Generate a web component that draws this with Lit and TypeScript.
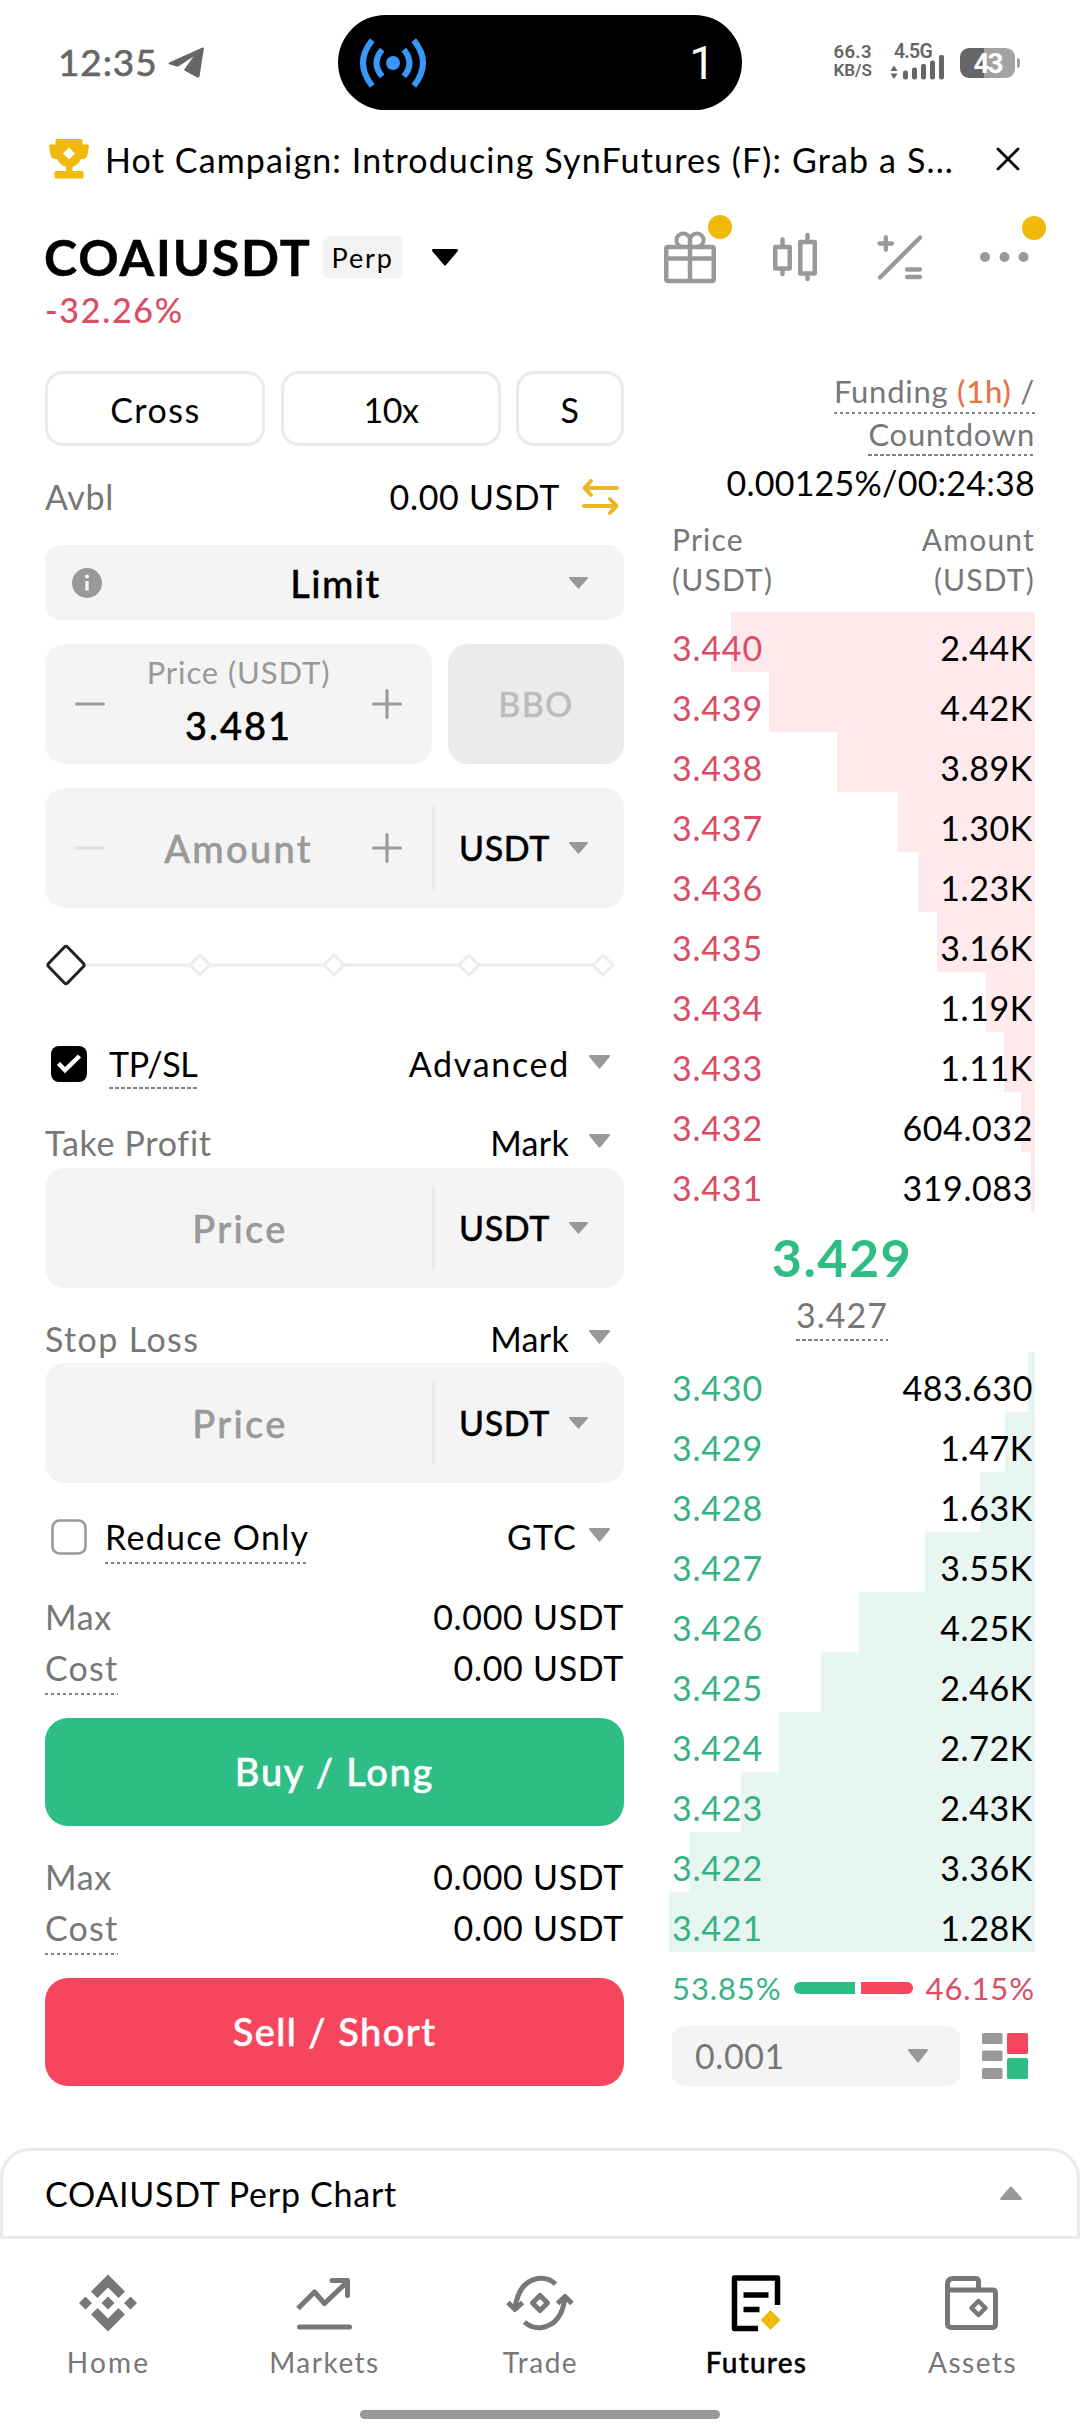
import { LitElement, html, css, svg } from "lit";
import { customElement, property } from "lit/decorators.js";

type Row = [price: string, amount: string, depth: number];

const ASKS: Row[] = [
  ["3.440", "2.44K", 304],
  ["3.439", "4.42K", 266],
  ["3.438", "3.89K", 198],
  ["3.437", "1.30K", 137],
  ["3.436", "1.23K", 117],
  ["3.435", "3.16K", 98],
  ["3.434", "1.19K", 49],
  ["3.433", "1.11K", 31],
  ["3.432", "604.032", 14],
  ["3.431", "319.083", 4],
];

const BIDS: Row[] = [
  ["3.430", "483.630", 7],
  ["3.429", "1.47K", 30],
  ["3.428", "1.63K", 55],
  ["3.427", "3.55K", 110],
  ["3.426", "4.25K", 176],
  ["3.425", "2.46K", 214],
  ["3.424", "2.72K", 256],
  ["3.423", "2.43K", 294],
  ["3.422", "3.36K", 346],
  ["3.421", "1.28K", 366],
];

const caret = (w: number, h: number, color: string, up = false) => html`
  <svg width=${w} height=${h} viewBox="0 0 20 13" preserveAspectRatio="none" fill=${color} stroke=${color}
    stroke-width="2" stroke-linejoin="round">
    ${up ? svg`<path d="M1 12L10 1.4L19 12z" />` : svg`<path d="M1 1L10 11.6L19 1z" />`}
  </svg>`;

@customElement("status-bar")
class StatusBar extends LitElement {
  static styles = css`
    :host { display: grid; grid-template-columns: 338px 404px 338px; height: 95px; padding-top: 15px; align-items: center; color: #666; }
    svg { display: block; }
    .left { display: flex; align-items: center; padding-left: 58px; gap: 10px; }
    .time { font: 400 37px/40px Lato, sans-serif; letter-spacing: 0.9px; -webkit-text-stroke: 0.6px #666; padding-bottom: 2px; }
    .island { display: flex; align-items: center; justify-content: space-between; height: 95px; border-radius: 48px; background: #000; padding: 0 27px 0 21px; box-sizing: border-box; }
    .count { font: 400 46px/50px Roboto, sans-serif; color: #fff; }
    .right { display: flex; align-items: center; justify-content: flex-end; padding-right: 60px; }
    .speed { font: 600 18.500px/18px Roboto, sans-serif; display: flex; flex-direction: column; margin-right: 18px; padding-bottom: 4px; letter-spacing: 0.400px; }
    .unit { font-size: 17px; letter-spacing: 0; }
    .net { width: 54px; display: flex; flex-direction: column; margin-right: 16px; padding-bottom: 2px; }
    .gen { font: 600 19.500px/18px Roboto, sans-serif; letter-spacing: -0.800px; padding-left: 4px; }
    .bars { margin-top: -6px; }
    .battery { width: 55px; height: 30px; border-radius: 9px; background: linear-gradient(90deg, #666 24px, #a3a3a3 24px); color: #fff; font: 700 28px/31px Roboto, sans-serif; letter-spacing: -2px; text-align: center; }
    .nub { width: 3px; height: 10px; margin-left: 2px; border-radius: 0 3px 3px 0; background: #a3a3a3; }
  `;
  render() {
    return html`
      <div class="left">
        <span class="time">12:35</span>
        <svg width="36" height="31" viewBox="0 0 36 31" fill="#666"><path d="M34.500 .6Q36 .2 35.900 1.600L31.500 29.500Q31 31.200 29.400 30.400L16.800 23.800Q15.800 23 16.600 22L25.400 9.600L11.400 18.800Q9.800 19.800 8 19.200L1.200 17.200Q-.3 16.300 1.200 15.400z" /></svg>
      </div>
      <div class="island">
        <svg width="68" height="52" viewBox="0 0 68 52" fill="none" stroke="#3797fb" stroke-width="6">
          <circle cx="34" cy="26" r="7" fill="#3797fb" stroke="none" />
          <path d="M23.200 12.600Q11.800 26 23.200 39.400M44.800 12.600Q56.200 26 44.800 39.400" />
          <path d="M13.200 3.200Q-5.200 26 13.200 48.800M54.800 3.200Q73.200 26 54.800 48.800" />
        </svg>
        <span class="count">1</span>
      </div>
      <div class="right">
        <div class="speed"><span>66.3</span><span class="unit">KB/S</span></div>
        <div class="net">
          <span class="gen">4.5G</span>
          <svg class="bars" width="54" height="25" viewBox="0 0 54 25" fill="#666">
            <path d="M4 10.500L7.600 16H.4zM4 24L7.600 18.500H.4z" />
            <rect x="13" y="15.500" width="5" height="9" rx="2" /><rect x="22" y="12.500" width="5" height="12" rx="2" />
            <rect x="31" y="9" width="5" height="15.500" rx="2" /><rect x="40" y="5.500" width="5" height="19" rx="2" />
            <rect x="49" y="0" width="5" height="24.500" rx="2" />
          </svg>
        </div>
        <div class="battery">43</div><div class="nub"></div>
      </div>`;
  }
}

@customElement("depth-rows")
class DepthRows extends LitElement {
  @property({ attribute: false }) rows: Row[] = [];
  @property() side = "ask";
  static styles = css`
    :host { display: flex; flex-direction: column; font: 400 34px/60px Lato, sans-serif; letter-spacing: 0.800px; }
    .row { position: relative; display: flex; justify-content: space-between; height: 60px; padding: 6px 2px 0 0; box-sizing: border-box; }
    .bar { position: absolute; right: 0; top: 0; height: 60px; }
    .ask .bar { background: #feeaed; }
    .bid .bar { background: #e8f6f1; }
    .price { position: relative; }
    .amount { position: relative; color: #000; letter-spacing: 0.600px; }
    .ask { color: #da4d64; }
    .bid { color: #36b285; }
  `;
  render() {
    return this.rows.map(([p, a, w]) => html`
      <div class="row ${this.side}">
        <div class="bar" style="width:${w}px"></div>
        <span class="price">${p}</span><span class="amount">${a}</span>
      </div>`);
  }
}

@customElement("order-form")
class OrderForm extends LitElement {
  static styles = css`
    :host { display: flex; flex-direction: column; width: 579px; font: 400 34px/40px Lato, sans-serif; letter-spacing: 0.700px; color: #000; }
    svg { display: block; }
    .row { display: flex; align-items: center; justify-content: space-between; height: 40px; }
    .muted { color: #777; }
    .modes { display: grid; grid-template-columns: 220px 220px 108px; justify-content: space-between; }
    .mode { height: 75px; box-sizing: border-box; border: 3px solid #ebebeb; border-radius: 18px; display: flex; align-items: center; justify-content: center; padding: 2px 0 0 1px; letter-spacing: 1.500px; }
    .tight { letter-spacing: -0.500px; }
    .avbl { margin-top: 31px; }
    .funds { display: flex; align-items: center; gap: 22px; padding-right: 5px; }
    .field { background: #f4f4f4; border-radius: 20px; height: 120px; display: flex; align-items: center; box-sizing: border-box; }
    .limit { margin-top: 28px; height: 75px; border-radius: 16px; padding: 0 36px 0 27px; justify-content: space-between; font-size: 38px; font-weight: 500; letter-spacing: 1.500px; -webkit-text-stroke: 0.400px; }
    .prices { display: grid; grid-template-columns: 387px 176px; justify-content: space-between; margin-top: 24px; }
    .step { padding: 0 30px; justify-content: space-between; }
    .stack { display: flex; flex-direction: column; align-items: center; padding-bottom: 9px; }
    .hint { font-size: 31px; line-height: 38px; letter-spacing: 0.900px; color: #999; margin-bottom: 12px; }
    .val { font-size: 38px; line-height: 44px; font-weight: 500; letter-spacing: 2px; -webkit-text-stroke: 0.400px; }
    .bbo { background: #ebebeb; color: #bcbcbc; justify-content: center; font-weight: 500; letter-spacing: 1.300px; -webkit-text-stroke: 0.400px; }
    .split { margin-top: 24px; }
    .main { width: 387px; box-sizing: border-box; display: flex; align-items: center; justify-content: space-between; padding: 0 30px; font-size: 38px; font-weight: 500; color: #999; letter-spacing: 2.300px; -webkit-text-stroke: 0.500px; }
    .main svg, .limit svg { -webkit-text-stroke: 0; }
    .main.only { justify-content: center; padding-left: 33px; }
    .unit { flex: 1; height: 84px; border-left: 3px solid #eaeaea; display: flex; align-items: center; justify-content: space-between; padding: 0 36px 0 24px; font-weight: 500; letter-spacing: 0.600px; -webkit-text-stroke: 0.400px; }
    .slider { margin-top: 34px; }
    .tpsl { height: 42px; margin-top: 55px; }
    .check { display: flex; align-items: center; padding-left: 6px; }
    .dash { position: relative; }
    .dash::after { content: ""; position: absolute; left: 0; right: 0; bottom: -7px; height: 2px; background: repeating-linear-gradient(90deg, #808080 0 3.500px, transparent 3.500px 6px); }
    .box { width: 36px; height: 36px; }
    .t1 { margin-left: 22px; letter-spacing: -0.400px; line-height: 36px; }
    .t2 { margin-left: 18px; letter-spacing: 1.300px; }
    .pick { display: flex; align-items: center; gap: 20px; padding-right: 14px; }
    .pick svg { margin-bottom: 4px; }
    .adv { letter-spacing: 1.700px; gap: 19px; }
    .mark { letter-spacing: 0.300px; }
    .gtc { letter-spacing: 1.200px; gap: 12px; }
    .tp { margin-top: 38px; }
    .sl { margin-top: 31px; }
    .sl .muted { letter-spacing: 1.400px; }
    .tp + .split { margin-top: 5px; }
    .sl + .split { margin-top: 4px; }
    .reduce { margin-top: 34px; }
    .max { margin-top: 40px; }
    .max.second { margin-top: 31px; }
    .cost { margin-top: 11px; }
    .cost .dash { letter-spacing: 1.200px; }
    .btn { height: 108px; box-sizing: border-box; padding-bottom: 2px; margin-top: 30px; border-radius: 23px; display: flex; align-items: center; justify-content: center; color: #fff; font-size: 38px; font-weight: 500; letter-spacing: 1.750px; -webkit-text-stroke: 0.500px; }
    .buy { background: #2ebd85; }
    .sell { background: #f6465d; letter-spacing: 1.450px; }
  `;
  private minus(color: string) {
    return html`<svg width="30" height="30" viewBox="0 0 30 30" stroke=${color} stroke-width="3" stroke-linecap="round"><path d="M1.500 15H28.500" /></svg>`;
  }
  private plus() {
    return html`<svg width="30" height="30" viewBox="0 0 30 30" stroke="#999" stroke-width="3" stroke-linecap="round"><path d="M1.500 15H28.500M15 1.500V28.500" /></svg>`;
  }
  private unit() {
    return html`<div class="unit"><span>USDT</span>${caret(19, 12, "#999")}</div>`;
  }
  private pick(label: string, cls: string) {
    return html`<div class="pick ${cls}"><span>${label}</span>${caret(21, 14, "#999")}</div>`;
  }
  private summary(cls = "") {
    return html`
      <div class="row max ${cls}"><span class="muted">Max</span><span>0.000 USDT</span></div>
      <div class="row cost"><span class="muted dash">Cost</span><span>0.00 USDT</span></div>`;
  }
  render() {
    return html`
      <div class="modes"><div class="mode">Cross</div><div class="mode tight">10x</div><div class="mode">S</div></div>
      <div class="row avbl">
        <span class="muted">Avbl</span>
        <div class="funds"><span>0.00 USDT</span>
          <svg width="37" height="36" viewBox="0 0 37 36" fill="none" stroke="#ebb725" stroke-width="4" stroke-linecap="round" stroke-linejoin="round"><path d="M35 9H2.500M9 2L2.500 9L9 16M2 27H34.500M28 20L34.500 27L28 34" /></svg>
        </div>
      </div>
      <div class="field limit">
        <svg width="30" height="30" viewBox="0 0 30 30"><circle cx="15" cy="15" r="15" fill="#999" /><circle cx="15" cy="8.600" r="2" fill="#f4f4f4" /><path d="M15 13V22.500" stroke="#f4f4f4" stroke-width="3.400" /></svg>
        <span>Limit</span>${caret(19, 12, "#999")}
      </div>
      <div class="prices">
        <div class="field step">${this.minus("#999")}
          <div class="stack"><span class="hint">Price (USDT)</span><span class="val">3.481</span></div>${this.plus()}
        </div>
        <div class="field bbo">BBO</div>
      </div>
      <div class="field split"><div class="main">${this.minus("#ddd")}<span>Amount</span>${this.plus()}</div>${this.unit()}</div>
      <svg class="slider" width="579" height="46" viewBox="0 0 579 46" fill="#fff" stroke-linejoin="round">
        <path d="M40 23H547" stroke="#eaecef" stroke-width="3" />
        ${[155, 289, 424, 558].map((x) => svg`<path d="M${x - 10} 23L${x} 13L${x + 10} 23L${x} 33z" stroke="#eaecef" stroke-width="3" />`)}
        <path d="M3.500 24.500Q2.300 23 3.500 21.500L19.500 5Q21 3.500 22.500 5L38.500 21.500Q39.700 23 38.500 24.500L22.500 41Q21 42.500 19.500 41z" stroke="#1e2329" stroke-width="3" />
      </svg>
      <div class="row tpsl">
        <div class="check">
          <svg class="box" viewBox="0 0 36 36"><rect width="36" height="36" rx="8" fill="#000" /><path d="M7.500 17.500L14 24L28.500 10" fill="none" stroke="#fff" stroke-width="4.500" /></svg>
          <span class="dash t1">TP/SL</span>
        </div>
        ${this.pick("Advanced", "adv")}
      </div>
      <div class="row tp"><span class="muted">Take Profit</span>${this.pick("Mark", "mark")}</div>
      <div class="field split"><div class="main only">Price</div>${this.unit()}</div>
      <div class="row sl"><span class="muted">Stop Loss</span>${this.pick("Mark", "mark")}</div>
      <div class="field split"><div class="main only">Price</div>${this.unit()}</div>
      <div class="row reduce">
        <div class="check">
          <svg class="box" viewBox="0 0 36 36"><rect x="1.500" y="1.500" width="33" height="33" rx="7" fill="#fff" stroke="#999" stroke-width="2.600" /></svg>
          <span class="dash t2">Reduce Only</span>
        </div>
        ${this.pick("GTC", "gtc")}
      </div>
      ${this.summary()}
      <div class="btn buy">Buy / Long</div>
      ${this.summary("second")}
      <div class="btn sell">Sell / Short</div>`;
  }
}

@customElement("order-book")
class OrderBook extends LitElement {
  static styles = css`
    :host { display: flex; flex-direction: column; width: 363px; font: 400 34px/40px Lato, sans-serif; color: #000; }
    .dash { position: relative; }
    .dash::after { content: ""; position: absolute; left: 0; right: 0; bottom: 0; height: 2px; background: repeating-linear-gradient(90deg, #808080 0 3.500px, transparent 3.500px 6px); }
    .fund { align-self: flex-end; height: 43px; font-size: 31px; color: #777; letter-spacing: 0.750px; }
    .fund b { color: #e5734a; font-weight: 500; }
    .count { align-self: flex-end; height: 42px; font-size: 31px; color: #777; letter-spacing: 0.750px; }
    .rate { align-self: flex-end; margin-top: 7px; letter-spacing: 0.250px; }
    .head { display: flex; justify-content: space-between; margin-top: 17px; margin-bottom: 13px; height: 79px; font-size: 30px; line-height: 39.500px; color: #777; letter-spacing: 1.200px; }
    .head div:last-child { text-align: right; }
    .mid { height: 140px; display: flex; flex-direction: column; align-items: center; padding: 15px 23px 0 0; box-sizing: border-box; }
    .last { font-size: 52px; line-height: 60px; font-weight: 700; color: #2ebd85; letter-spacing: 1.500px; }
    .index { margin-top: 8px; height: 46px; color: #777; letter-spacing: 1px; }
    .ratio { display: flex; align-items: center; justify-content: space-between; height: 40px; margin-top: 16px; font-size: 31px; letter-spacing: 0.900px; }
    .buy { color: #36b285; }
    .sell { color: #da4d64; }
    .bars { display: flex; gap: 6px; width: 119px; height: 12px; }
    .bars i { display: block; border-radius: 6px 0 0 6px; background: #2ebd85; }
    .bars i + i { border-radius: 0 6px 6px 0; background: #f6465d; flex: 1; }
    .foot { display: flex; align-items: center; justify-content: space-between; margin-top: 18px; padding-right: 7px; }
    .tick { width: 288px; height: 60px; box-sizing: border-box; border-radius: 12px; background: #f4f4f4; display: flex; align-items: center; justify-content: space-between; padding: 0 32px 0 23px; color: #777; letter-spacing: 0.600px; }
    svg { display: block; }
  `;
  render() {
    return html`
      <div class="fund dash">Funding <b>(1h)</b> /</div>
      <div class="count dash">Countdown</div>
      <div class="rate">0.00125%/00:24:38</div>
      <div class="head"><div>Price<br />(USDT)</div><div>Amount<br />(USDT)</div></div>
      <depth-rows side="ask" .rows=${ASKS}></depth-rows>
      <div class="mid"><div class="last">3.429</div><div class="index dash">3.427</div></div>
      <depth-rows side="bid" .rows=${BIDS}></depth-rows>
      <div class="ratio"><span class="buy">53.85%</span><div class="bars"><i style="width:${(53.85 / 100) * 113}px"></i><i></i></div><span class="sell">46.15%</span></div>
      <div class="foot">
        <div class="tick"><span>0.001</span>${caret(20, 14, "#999")}</div>
        <svg width="46" height="46" viewBox="0 0 46 46"><g fill="#999"><rect width="20.500" height="11" rx="1.500" /><rect y="17.500" width="20.500" height="10.500" rx="1.500" /><rect y="35" width="20.500" height="11" rx="1.500" /></g><rect x="25" width="21" height="21" rx="1.500" fill="#f6465d" /><rect x="25" y="25" width="21" height="21" rx="1.500" fill="#2ebd85" /></svg>
      </div>`;
  }
}

const NAV = [
  { label: "Home", cls: "home", icon: svg`<g fill="#777"><path d="M30 1.500L47 18.500L40.500 25L30 14.500L19.500 25L13 18.500z" /><path d="M30 58.500L47 41.500L40.500 35L30 45.500L19.500 35L13 41.500z" /><path d="M30 23.500L36.500 30L30 36.500L23.500 30zM7.500 23.500L14 30L7.500 36.500L1 30zM52.500 23.500L59 30L52.500 36.500L46 30z" /></g>` },
  { label: "Markets", cls: "", icon: svg`<g fill="none" stroke="#777" stroke-width="5" stroke-linejoin="round"><path d="M4 35.500L20.500 19L30.500 30.500L53 9" /><path d="M38 7.500H53.500V22.500" stroke-linecap="round" /><path d="M5.500 54H55.500" stroke-linecap="round" /></g>` },
  { label: "Trade", cls: "", icon: svg`<g fill="none" stroke="#777" stroke-width="5" stroke-linejoin="round"><path d="M45.500 11Q38 4 28 5.500Q8 9 5 36" /><path d="M-2 29.500L5 36.500L12.500 29.500" /><path d="M14.500 49Q22 56 32 54.500Q52 51 55 24" /><path d="M47.500 30.500L55 23.500L62 30.500" /><path d="M30 22.500L37.500 30L30 37.500L22.500 30z" /></g>` },
  { label: "Futures", cls: "on", icon: svg`<g fill="none" stroke="#000" stroke-width="5.500" stroke-linejoin="round"><path d="M32 55.500H8.500V5H51.500V32" /><path d="M17.500 22H42.500M17.500 36.500H33.500" /></g><path d="M44.500 37L54.500 47L44.500 57L34.500 47z" fill="#f0b90b" />` },
  { label: "Assets", cls: "", icon: svg`<g fill="none" stroke="#777" stroke-width="5" stroke-linejoin="round"><path d="M36.500 17V8.500Q36.500 5.500 33.500 5.500H11Q5.500 5.500 5.500 11.500V50.500Q5.500 54.500 9.500 54.500H50Q53.500 54.500 53.500 51V20Q53.500 17 50.500 17H6" /><path d="M36.500 28L43.500 35L36.500 42L29.500 35z" stroke-width="4.500" /></g>` },
];

@customElement("app-root")
class AppRoot extends LitElement {
  static styles = css`
    :host { display: flex; flex-direction: column; width: 1080px; height: 2436px; background: #fff; overflow: hidden; font-family: Lato, "Noto Sans", sans-serif; color: #000; }
    svg { display: block; overflow: visible; }
    .banner { display: flex; align-items: center; height: 70px; margin-top: 14px; padding: 0 61px 0 49px; font-size: 34px; letter-spacing: 1.140px; }
    .banner span { margin: 1px auto 0 16px; white-space: nowrap; }
    .head { display: flex; align-items: center; height: 64px; margin-top: 31px; padding: 0 51px 0 44px; }
    .pair { font-size: 50px; line-height: 60px; font-weight: 700; letter-spacing: 1.900px; -webkit-text-stroke: 0.500px; }
    .chip { margin: 0 29px 0 11px; height: 42px; width: 80px; line-height: 43px; border-radius: 6px; background: #f3f3f3; font-size: 27px; letter-spacing: 1.900px; text-align: center; }
    .tools { display: flex; align-items: center; margin-left: auto; }
    .tool { position: relative; }
    .candles { margin-left: 57px; }
    .calc { margin-left: 60px; }
    .more { margin-left: 57px; }
    .badge { position: absolute; width: 24px; height: 24px; border-radius: 50%; background: #f0b90b; }
    .b1 { left: 44px; top: -16px; }
    .b2 { left: 42px; top: -36.500px; }
    .change { height: 40px; padding-left: 45px; font-size: 34px; line-height: 41px; letter-spacing: 1.700px; color: #da4d64; font-weight: 500; }
    .body { display: flex; justify-content: space-between; height: 1715px; margin-top: 42px; padding: 0 45px; }
    .chart { display: flex; align-items: center; justify-content: space-between; box-sizing: border-box; height: 91px; margin-top: 62px; padding: 0 55px 1px 42px; border: 3px solid #ebebeb; border-radius: 30px 30px 0 0; font-size: 34px; letter-spacing: 0.730px; }
    .nav { display: grid; grid-template-columns: repeat(5, 216px); height: 161px; padding-top: 34px; box-sizing: border-box; }
    .item { display: flex; flex-direction: column; align-items: center; color: #777; font-size: 28px; line-height: 34px; letter-spacing: 1.500px; gap: 12px; }
    .item span { padding-left: 1px; }
    .item.on { color: #000; font-weight: 500; letter-spacing: 1.200px; -webkit-text-stroke: 0.400px; }
    .item.home { letter-spacing: 2.200px; }
    .pill { width: 360px; height: 9px; margin: 10px auto 0; border-radius: 5px; background: #999; }
  `;
  render() {
    return html`
      <status-bar></status-bar>
      <div class="banner">
        <svg width="40" height="40" viewBox="0 0 40 40" fill="#f0b90b">
          <path fill-rule="evenodd" d="M8 0H32Q33.500 0 33.500 1.500V5.500H38.500Q40 5.500 40 7L38.500 16Q37.500 19.500 34 20H32Q29 26 23.500 28V32H33Q34.500 32 34.500 33.500V38Q34.500 39.500 33 39.500H7Q5.500 39.500 5.500 38V33.500Q5.500 32 7 32H17V28Q11 26 8 20H6Q2.500 19.500 1.500 16L0 7Q0 5.500 1.500 5.500H6.500V1.500Q6.500 0 8 0zM20 8.500L14 14.500L20 20.500L26 14.500z" />
        </svg>
        <span>Hot Campaign: Introducing SynFutures (F): Grab a S...</span>
        <svg width="22" height="22" viewBox="0 0 22 22" stroke="#000" stroke-width="2.800" stroke-linecap="round"><path d="M1 1L21 21M21 1L1 21" /></svg>
      </div>
      <div class="head">
        <span class="pair">COAIUSDT</span><span class="chip">Perp</span>${caret(26, 17, "#000")}
        <div class="tools">
          <div class="tool">
            <svg width="52" height="52" viewBox="0 0 52 52" fill="none" stroke="#999" stroke-width="4.500" stroke-linejoin="round"><rect x="2.250" y="16" width="47.500" height="34" rx="1.500" /><path d="M2 27.500H50M26 9V50" /><path d="M26 9.500A6.800 6.800 0 1 0 19 16M26 9.500A6.800 6.800 0 1 1 33 16" stroke-width="4" /></svg>
            <div class="badge b1"></div>
          </div>
          <svg class="candles" width="44" height="50" viewBox="0 0 44 50" fill="none" stroke="#999" stroke-width="4.500" stroke-linecap="round" stroke-linejoin="round"><rect x="2.250" y="15" width="14.500" height="21.500" /><rect x="27.250" y="10" width="14.500" height="31.500" /><path d="M9.500 7.500V15M9.500 37V42M34.500 3V10M34.500 42V47" /></svg>
          <svg class="calc" width="46" height="46" viewBox="0 0 46 46" fill="none" stroke="#999" stroke-width="4.300" stroke-linecap="round"><path d="M3 43.500L43 3.500M2.500 9.500H15M8.800 3.200V15.800M30 35.500H43M30 43H43" /></svg>
          <div class="tool more">
            <svg width="49" height="10" viewBox="0 0 49 10" fill="#999"><circle cx="5" cy="5" r="5" /><circle cx="24.500" cy="5" r="5" /><circle cx="43.500" cy="5" r="5" /></svg>
            <div class="badge b2"></div>
          </div>
        </div>
      </div>
      <div class="change">-32.26%</div>
      <div class="body"><order-form></order-form><order-book></order-book></div>
      <div class="chart"><span>COAIUSDT Perp Chart</span>${caret(22, 14, "#999", true)}</div>
      <div class="nav">
        ${NAV.map((n) => html`<div class="item ${n.cls}"><svg width="60" height="60" viewBox="0 0 60 60">${n.icon}</svg><span>${n.label}</span></div>`)}
      </div>
      <div class="pill"></div>`;
  }
}
